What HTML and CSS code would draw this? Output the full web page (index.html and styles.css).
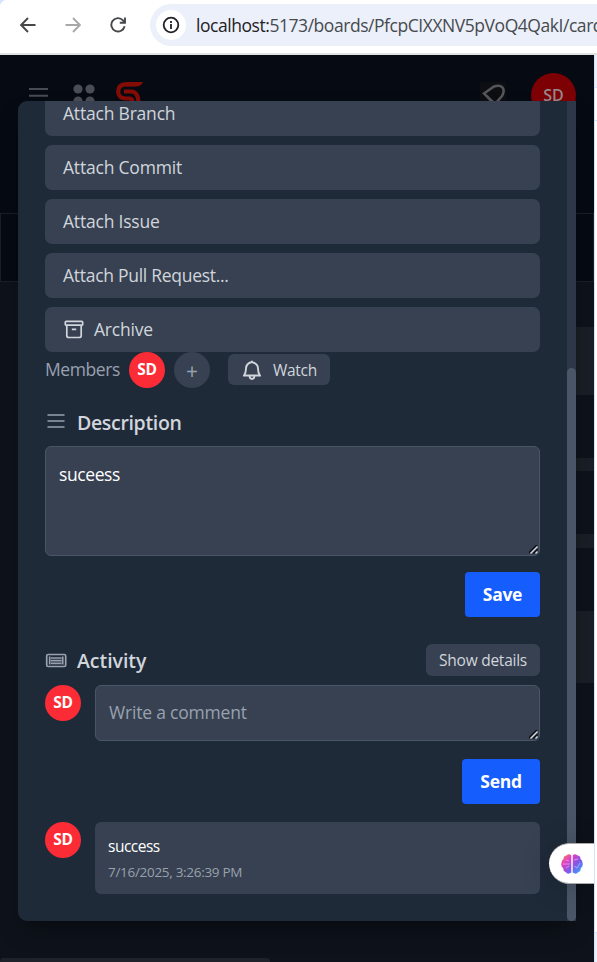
FILE: index.html
```html
<!DOCTYPE html>
<html lang="en">
<head>
<meta charset="utf-8">
<title>Card</title>
<link rel="stylesheet" href="styles.css">
</head>
<body>
<div class="browser">
  <header class="toolbar">
    <svg class="nav" width="16" height="16" viewBox="0 0 16 16"><path d="M8 1 1.200 8 8 15M1.500 8H15.500"/></svg>
    <svg class="nav muted" width="16" height="16" viewBox="0 0 16 16"><path d="M8 1 14.800 8 8 15M14.500 8H.5"/></svg>
    <svg class="nav" width="16" height="16" viewBox="0 0 16 16"><path d="M14.600 9.200A6.700 6.700 0 1 1 13 3.300L14.800 5.500M15 .5V5.700H9.800"/></svg>
    <div class="address">
      <span class="info"><svg width="18" height="18" viewBox="0 0 18 18"><circle cx="9" cy="9" r="7.300"/><path d="M9 8v5M9 5v1.900"/></svg></span>
      <span class="url"><b>localhost:</b>5173/boards/PfcpCIXXNV5pVoQ4QakI/card</span>
    </div>
  </header>
  <div class="viewport">
    <main class="page">
      <div class="app-header">
        <svg class="menu" width="22" height="22" viewBox="0 0 22 22"><path d="M1 7h19M1 13.800h19"/></svg>
        <svg class="grid-icon" width="22" height="24" viewBox="0 0 22 24"><circle cx="5" cy="5" r="4.600"/><circle cx="17" cy="5" r="4.600"/><circle cx="5" cy="17" r="4.600"/><circle cx="17" cy="17" r="4.600"/></svg>
        <svg class="logo" width="28" height="30" viewBox="0 0 28 30"><path class="tip" d="M10 0H27Q25 4.500 20 4.500H10z"/><path d="M20 2.200H10.500Q2.200 2.500 2.200 9.500 2.200 16.500 10 16.500H14Q17 17 17 22M8 9.500H15.500Q22.500 10 22.500 22"/></svg>
        <span class="bell-tile"><svg width="26" height="26" viewBox="0 0 26 26"><path d="M4 11.500 14 4.500Q20 2.500 22.500 5.500 25 9 22 14L15 22ZM4 11.500 14 22"/></svg></span>
        <span class="account">SD</span>
      </div>
      <div class="board-bar"></div>
      <div class="lists"><i class="tall"></i><i class="slim"></i><i class="mid"></i><i class="last"></i></div>
      <div class="hscroll"></div>

      <section class="modal">
        <div class="body">
          <nav class="actions">
            <button>Attach Branch</button>
            <button>Attach Commit</button>
            <button>Attach Issue</button>
            <button class="pull">Attach Pull Request...</button>
            <button><svg width="20" height="20" viewBox="0 0 20 20"><rect x="1.300" y="2.400" width="17.400" height="3.800" rx="1"/><path d="M2.800 6.300V16.500q0 2 2 2h10.400q2 0 2-2V6.300M7.800 10.300h4.400"/></svg>Archive</button>
          </nav>
          <div class="members">
            <span class="label">Members</span>
            <span class="avatar">SD</span>
            <span class="avatar add">+</span>
            <button class="watch"><svg width="18" height="20" viewBox="0 0 18 20"><path d="M1 15.500q2-2.500 2-7Q3 3.500 9 2q6 1.500 6 6.500 0 4.500 2 7zM6.500 16q.3 3 2.500 3t2.500-3M9 2V.7"/></svg>Watch</button>
          </div>
          <div class="heading desc-head">
            <svg width="18" height="14" viewBox="0 0 18 14"><path d="M.5 1h17M.5 7h17M.5 13h17"/></svg>
            <h2>Description</h2>
          </div>
          <div class="field">
            <textarea class="desc">suceess</textarea>
            <svg class="grip" width="10" height="10" viewBox="0 0 10 10"><path class="dark" d="M0 8 8 0M4.500 8.500 8.500 4.500"/><path d="M1.500 8.500 8.500 1.500M6.500 8.500l2-2"/></svg>
          </div>
          <button class="primary save">Save</button>
          <div class="heading activity-head">
            <svg class="activity" width="22" height="15" viewBox="0 0 22 15"><rect x="1.700" y="1.500" width="19" height="12" rx="1.500"/><path d="M4.700 3.500v8M17.700 3.500v8M6 5h10.500M6 7.700h10.500M6 10.400h10.500"/></svg>
            <h2>Activity</h2>
            <button class="details">Show details</button>
          </div>
          <div class="row">
            <span class="avatar">SD</span>
            <div class="field">
              <textarea class="comment" placeholder="Write a comment"></textarea>
              <svg class="grip" width="10" height="10" viewBox="0 0 10 10"><path class="dark" d="M0 8 8 0M4.500 8.500 8.500 4.500"/><path d="M1.500 8.500 8.500 1.500M6.500 8.500l2-2"/></svg>
            </div>
          </div>
          <button class="primary send">Send</button>
          <div class="row">
            <span class="avatar">SD</span>
            <article class="entry"><p>success</p><time>7/16/2025, 3:26:39 PM</time></article>
          </div>
        </div>
        <div class="track"><div class="thumb"></div></div>
      </section>

      <div class="assistant">
        <svg width="22" height="20" viewBox="0 0 22 20">
          <defs><linearGradient id="g" x1="0" y1="0" x2="1" y2="1"><stop offset="0" stop-color="#f7923b"/><stop offset=".3" stop-color="#e23fc4"/><stop offset=".6" stop-color="#8158e8"/><stop offset="1" stop-color="#24b6ff"/></linearGradient></defs>
          <path fill="url(#g)" d="M10.300 1.500V18.500Q7 21 4.500 18 2 17.500 2.200 14-.5 12.500.5 8.500.5 6 2.500 5 2.500 2 5.500 1.600 8-1 10.300 1.500zM11.700 1.500V18.500Q15 21 17.500 18 20 17.500 19.800 14 22.500 12.500 21.500 8.500 21.500 6 19.500 5 19.500 2 16.500 1.600 14-1 11.700 1.500z"/>
          <path class="folds" d="M2 10h7M5 6l3 1M5 14l3-2M13 6l4-1M13 12l3 2 3-5"/>
        </svg>
      </div>
    </main>
    <aside class="edge"></aside>
  </div>
</div>
</body>
</html>
```
FILE: styles.css
```css
* { box-sizing: border-box; }
body { margin: 0; width: 597px; height: 962px; overflow: hidden; background: #fff; font-family: "Open Sans", sans-serif; }
button, textarea { font: inherit; border: 0; margin: 0; }
svg { fill: none; flex: none; display: block; }
.browser { display: flex; flex-direction: column; height: 962px; }

.toolbar { display: flex; align-items: center; height: 55px; padding: 0 0 4px 20px; border-bottom: 2px solid #dfe3df; gap: 29px; overflow: hidden; background: radial-gradient(circle at 8px 8px, #fff 8px, #d3e3fd 9px) 0 0 / 8px 8px no-repeat #fff; }
.nav { stroke: #46484a; stroke-width: 1.9; }
.nav.muted { stroke: #a9a9aa; }
.address { display: flex; align-items: center; flex: none; width: 480px; height: 42px; margin-left: -5px; padding-left: 6px; border-radius: 21px; background: #ebf0fa; margin-top: 1px; }
.info { display: grid; place-items: center; width: 30px; height: 30px; border-radius: 50%; background: #fff; }
.info svg { stroke: #1f2124; stroke-width: 1.8; }
.url { margin-left: 10px; font-size: 17.5px; letter-spacing: -0.45px; color: #474a4e; white-space: nowrap; }
.url b { font-weight: 400; color: #1f2124; }

.viewport { display: flex; flex: 1; min-height: 0; }
.page { position: relative; display: flex; flex-direction: column; width: 594px; background: #0e131b; overflow: hidden; }
.edge { flex: 1; border-left: 1px solid #d3e3fd; background: linear-gradient(#ebf0fa 32px, #d3e3fd 32px 33px, #fff 33px 65px, #d3e3fd 65px 66px, #fff 66px 877px, #d3e3fd 877px 878px, #ebf0fa 878px); }
.app-header { display: flex; align-items: flex-start; height: 158px; padding: 18px 18px 0 28px; background: #060a12; }
.menu { margin-top: 9px; stroke: #484b52; stroke-width: 2; }
.grid-icon { margin: 11px 0 0 23px; fill: #4a4d54; }
.logo { margin: 9px 0 0 21px; stroke: #850c05; stroke-width: 4.2; }
.logo .tip { fill: #850c05; stroke: none; }
.bell-tile { margin: 9px 25px 0 auto; background: #0c0e11; }
.bell-tile svg { stroke: #54565b; stroke-width: 2.5; }
.account { width: 45px; height: 45px; border-radius: 50%; background: #7d0005; color: #96898b; text-align: center; font-size: 16px; font-weight: 600; line-height: 45px; }
.board-bar { height: 69px; border: 1px solid #1b1f26; background: #060a12; }
.lists { display: flex; flex-direction: column; align-items: flex-end; height: 676px; padding-top: 45px; }
.lists i { width: 30px; background: #1a1e26; }
.tall { height: 68px; margin-bottom: 63px; }
.slim { height: 13px; margin-bottom: 63px; }
.mid { height: 14px; margin-bottom: 63px; }
.last { height: 72px; }
.hscroll { width: 270px; height: 4px; border-radius: 4px 4px 0 0; background: #20222b; }

.modal { position: absolute; left: 18px; top: 46px; display: flex; width: 558px; height: 820px; overflow: hidden; border-radius: 9px 0 0 9px; background: #1f2a39; box-shadow: 0 12px 24px -6px #0007; }
.body { width: 549px; padding: 0 27px; margin-top: -10px; }
.track { width: 9px; height: 820px; padding-top: 267px; background: #2d3748; }
.thumb { height: 553px; border-radius: 5px; background: #4a5567; }
.actions { display: flex; flex-direction: column; gap: 9px; }
.actions button { display: flex; align-items: center; flex: none; gap: 10px; height: 45px; padding: 0 18px 2px; border-radius: 7px; background: #374151; color: #d1d5dc; font-size: 17.5px; letter-spacing: -0.2px; }
.actions .pull { letter-spacing: -0.28px; }
.actions svg { margin-left: 1px; stroke: #d1d5dc; stroke-width: 1.7; }
.members { display: flex; align-items: center; height: 36px; }
.label { width: 84px; color: #99a1af; font-size: 17.5px; letter-spacing: -0.42px; line-height: 24px; margin-top: -2px; }
.avatar { flex: none; width: 36px; height: 36px; border-radius: 50%; background: #fb2c36; color: #fff; text-align: center; font-size: 15.5px; font-weight: 700; line-height: 35px; letter-spacing: -0.2px; }
.add { margin-left: 9px; background: #374151; color: #99a1af; font-size: 21px; font-weight: 400; line-height: 38px; }
.watch { display: flex; align-items: center; gap: 12px; width: 102px; height: 31px; margin: -1px 0 0 18px; padding: 0 0 0 15px; border-radius: 6px; background: #374151; color: #d1d5dc; font-size: 15.5px; letter-spacing: -0.3px; }
.watch svg { stroke: #d1d5dc; stroke-width: 1.9; }
.heading { display: flex; align-items: center; }
.heading h2 { margin: 0; color: #d1d5dc; font-size: 19.5px; font-weight: 600; letter-spacing: -0.33px; }
.desc-head { height: 58px; padding-top: 10px; }
.desc-head svg { margin: -2px 12px 0 2px; stroke: #99a1af; stroke-width: 1.5; }
.field { position: relative; flex: 1; }
textarea { display: block; width: 100%; border: 1px solid #4a5565; border-radius: 6px; background: #374151; color: #fff; resize: none; outline: 0; font-size: 17.5px; letter-spacing: -0.4px; line-height: 28px; padding: 13px 13px; overflow: hidden; }
.desc { height: 110px; }
.comment { height: 56px; padding-top: 12px; letter-spacing: -0.2px; }
.comment::placeholder { color: #99a1af; }
.grip { position: absolute; right: 1px; bottom: 1px; stroke: #ddd; stroke-width: 1.4; }
.grip .dark { stroke: #0b1018; stroke-width: 1.6; }
.primary { display: block; height: 45px; margin-left: auto; padding: 0 0 2px; border-radius: 4px; background: #155dfc; color: #fff; font-size: 17.5px; font-weight: 700; letter-spacing: -0.3px; }
.save { width: 75px; margin-top: 16px; }
.send { width: 78px; margin-top: 18px; margin-bottom: 18px; }
.activity-head { height: 32px; margin: 27px 0 9px; }
.activity-head h2 { letter-spacing: -0.05px; }
.activity { margin-right: 10px; stroke: #99a1af; stroke-width: 1.7; }
.details { width: 114px; height: 32px; padding: 0; margin-left: auto; border-radius: 6px; background: #374151; color: #d1d5dc; font-size: 15.5px; letter-spacing: -0.25px; }
.row { display: flex; gap: 14px; }
.entry { flex: 1; height: 72px; padding: 13px; border-radius: 6px; background: #374151; }
.entry p { margin: 0; color: #fff; font-size: 15.5px; letter-spacing: -0.5px; line-height: 23px; }
.entry time { display: block; margin-top: 5px; color: #99a1af; font-size: 13.5px; letter-spacing: -0.3px; line-height: 18px; }

.assistant { position: absolute; right: 0; top: 788px; display: flex; align-items: center; width: 45px; height: 41px; padding-left: 12px; border: 1px solid #aaa; border-width: 1px 0; border-radius: 21px 0 0 21px; background: #fff; box-shadow: 0 2px 30px #0003; }
.folds { stroke: #ffffff80; stroke-width: .8; }
```
